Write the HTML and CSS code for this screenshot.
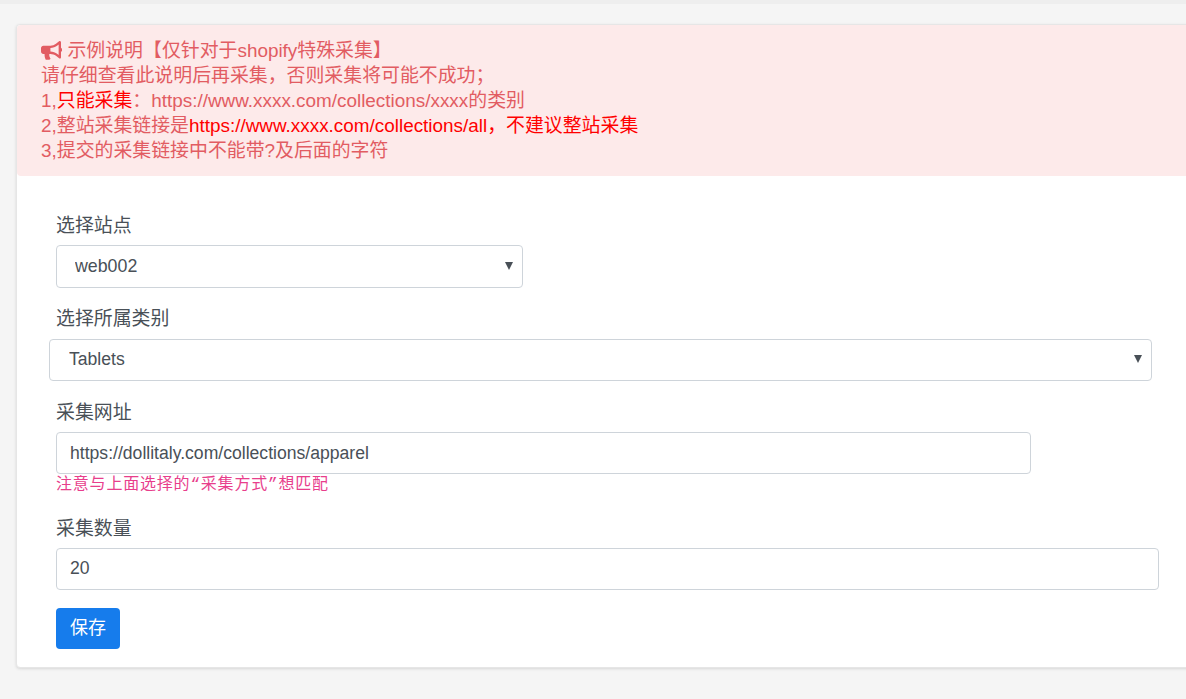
FILE: index.html
```html
<!DOCTYPE html>
<html lang="zh-CN">
<head>
<meta charset="utf-8">
<title>示例说明</title>
<link rel="stylesheet" href="styles.css">
</head>
<body>
<div class="topbar"></div>
<main class="card">
  <section class="alert">
    <div><svg class="icon" viewBox="0 0 576 512" aria-hidden="true"><path fill="currentColor" d="M576 240c0-23.63-12.95-44.04-32-55.12V32.01C544 23.26 537.02 0 512 0c-7.12 0-14.19 2.38-19.98 7.02l-85.03 68.03C364.28 109.19 310.66 128 256 128H64c-35.35 0-64 28.65-64 64v96c0 35.35 28.65 64 64 64h33.7c-1.39 10.48-2.18 21.14-2.18 32 0 39.77 9.26 77.35 25.56 110.94 5.19 10.69 16.52 17.06 28.4 17.06h74.28c26.05 0 41.69-29.84 25.9-50.56-16.4-21.52-26.15-48.36-26.15-77.44 0-11.11 1.62-21.79 4.41-32H256c54.66 0 108.28 18.81 150.98 52.95l85.03 68.03a32.023 32.023 0 0 0 19.98 7.02c24.92 0 32-22.78 32-32V295.13C563.05 284.04 576 263.63 576 240zm-96 141.42l-33.05-26.44C392.95 311.78 325.12 288 256 288v-96c69.12 0 136.95-23.78 190.95-66.98L480 98.58v282.84z"/></svg> 示例说明【仅针对于shopify特殊采集】</div>
    <div>请仔细查看此说明后再采集，否则采集将可能不成功；</div>
    <div>1,<span class="red">只能采集</span>：https://www.xxxx.com/collections/xxxx的类别</div>
    <div>2,整站采集链接是<span class="red">https://www.xxxx.com/collections/all，不建议整站采集</span></div>
    <div>3,提交的采集链接中不能带?及后面的字符</div>
  </section>
  <form class="form">
    <div class="group group-site">
      <label class="label" for="site">选择站点</label>
      <div class="select-wrap wrap-site"><select class="control select" id="site"><option>web002</option></select></div>
    </div>
    <div class="group group-cat">
      <label class="label" for="cat">选择所属类别</label>
      <div class="select-wrap wrap-cat"><select class="control select" id="cat"><option>Tablets</option></select></div>
    </div>
    <div class="group group-url">
      <label class="label" for="url">采集网址</label>
      <input class="control input-url" id="url" type="text" value="https://dollitaly.com/collections/apparel">
      <code class="hint">注意与上面选择的“采集方式”想匹配</code>
    </div>
    <div class="group group-num">
      <label class="label" for="num">采集数量</label>
      <input class="control input-num" id="num" type="text" value="20">
    </div>
    <button class="btn" type="button">保存</button>
  </form>
</main>
</body>
</html>
```
FILE: styles.css
```css
* { box-sizing: border-box; }
html, body { margin: 0; height: 100%; overflow: hidden; }
body {
  background: #f5f5f5;
  color: #495057;
  font-family: "Liberation Sans", "Noto Sans CJK SC", sans-serif;
  font-size: 18.9px;
  line-height: 25px;
}
.topbar { height: 4px; background: #eeeeee; }
.card {
  width: 1200px;
  margin: 20px 0 0 16px;
  height: 644px;
  background: #fff;
  border: 1px solid #e6e6e6;
  border-radius: 4px 0 0 4px;
  box-shadow: 0 1px 3px rgba(0, 0, 0, .12);
  overflow: hidden;
}
.alert {
  height: 151px;
  padding: 13px 24px;
  background: #fdeaea;
  color: #e25c62;
  border-radius: 4px 0 0 4px;
}
.red { color: #ff0000; }
.icon { width: 21.2px; height: 18.8px; vertical-align: -3px; }
.form { padding: 37px 0 0 39px; }
.label { display: block; height: 25px; }
.group-site .label { margin-bottom: 7px; }
.group-cat { margin-top: 18px; }
.group-cat .label { margin-bottom: 8px; }
.group-url { margin-top: 19px; }
.group-url .label { margin-bottom: 7px; }
.group-num { margin-top: 20px; }
.group-num .label { margin-bottom: 7px; }
.control {
  display: block;
  height: 42px;
  background: #fff;
  color: #495057;
  border: 1px solid #ced4da;
  border-radius: 4px;
  font-family: "Liberation Sans", "Noto Sans CJK SC", sans-serif;
  font-size: 17.6px;
  padding: 0 13px;
  outline: 0;
}
.select-wrap { position: relative; }
.select-wrap::after {
  content: "";
  position: absolute;
  top: 50%;
  right: 10px;
  margin-top: -5px;
  border-style: solid;
  border-width: 8px 4px 0;
  border-color: #495057 transparent transparent;
  pointer-events: none;
}
.wrap-site { width: 467px; }
.wrap-cat { width: 1103px; margin-left: -7px; }
.select {
  width: 100%;
  appearance: none;
  padding: 0 0 2px 19px;
}
.wrap-site .select { height: 43px; font-size: 17.8px; padding-left: 18px; }
.input-url { width: 975px; }
.input-num { width: 1103px; padding-bottom: 2px; }
.hint {
  display: block;
  height: 22px;
  line-height: 23px;
  color: #e83e8c;
  font-family: "Liberation Mono", "Noto Sans CJK SC", monospace;
  font-size: 16px;
  letter-spacing: 0.8px;
}
.btn {
  display: block;
  width: 64px;
  height: 41px;
  margin-top: 18px;
  padding: 0 0 6px;
  background: #167cec;
  color: #fff;
  border: 0;
  border-radius: 4px;
  font-family: "Liberation Sans", "Noto Sans CJK SC", sans-serif;
  font-size: 18px;
}
```
